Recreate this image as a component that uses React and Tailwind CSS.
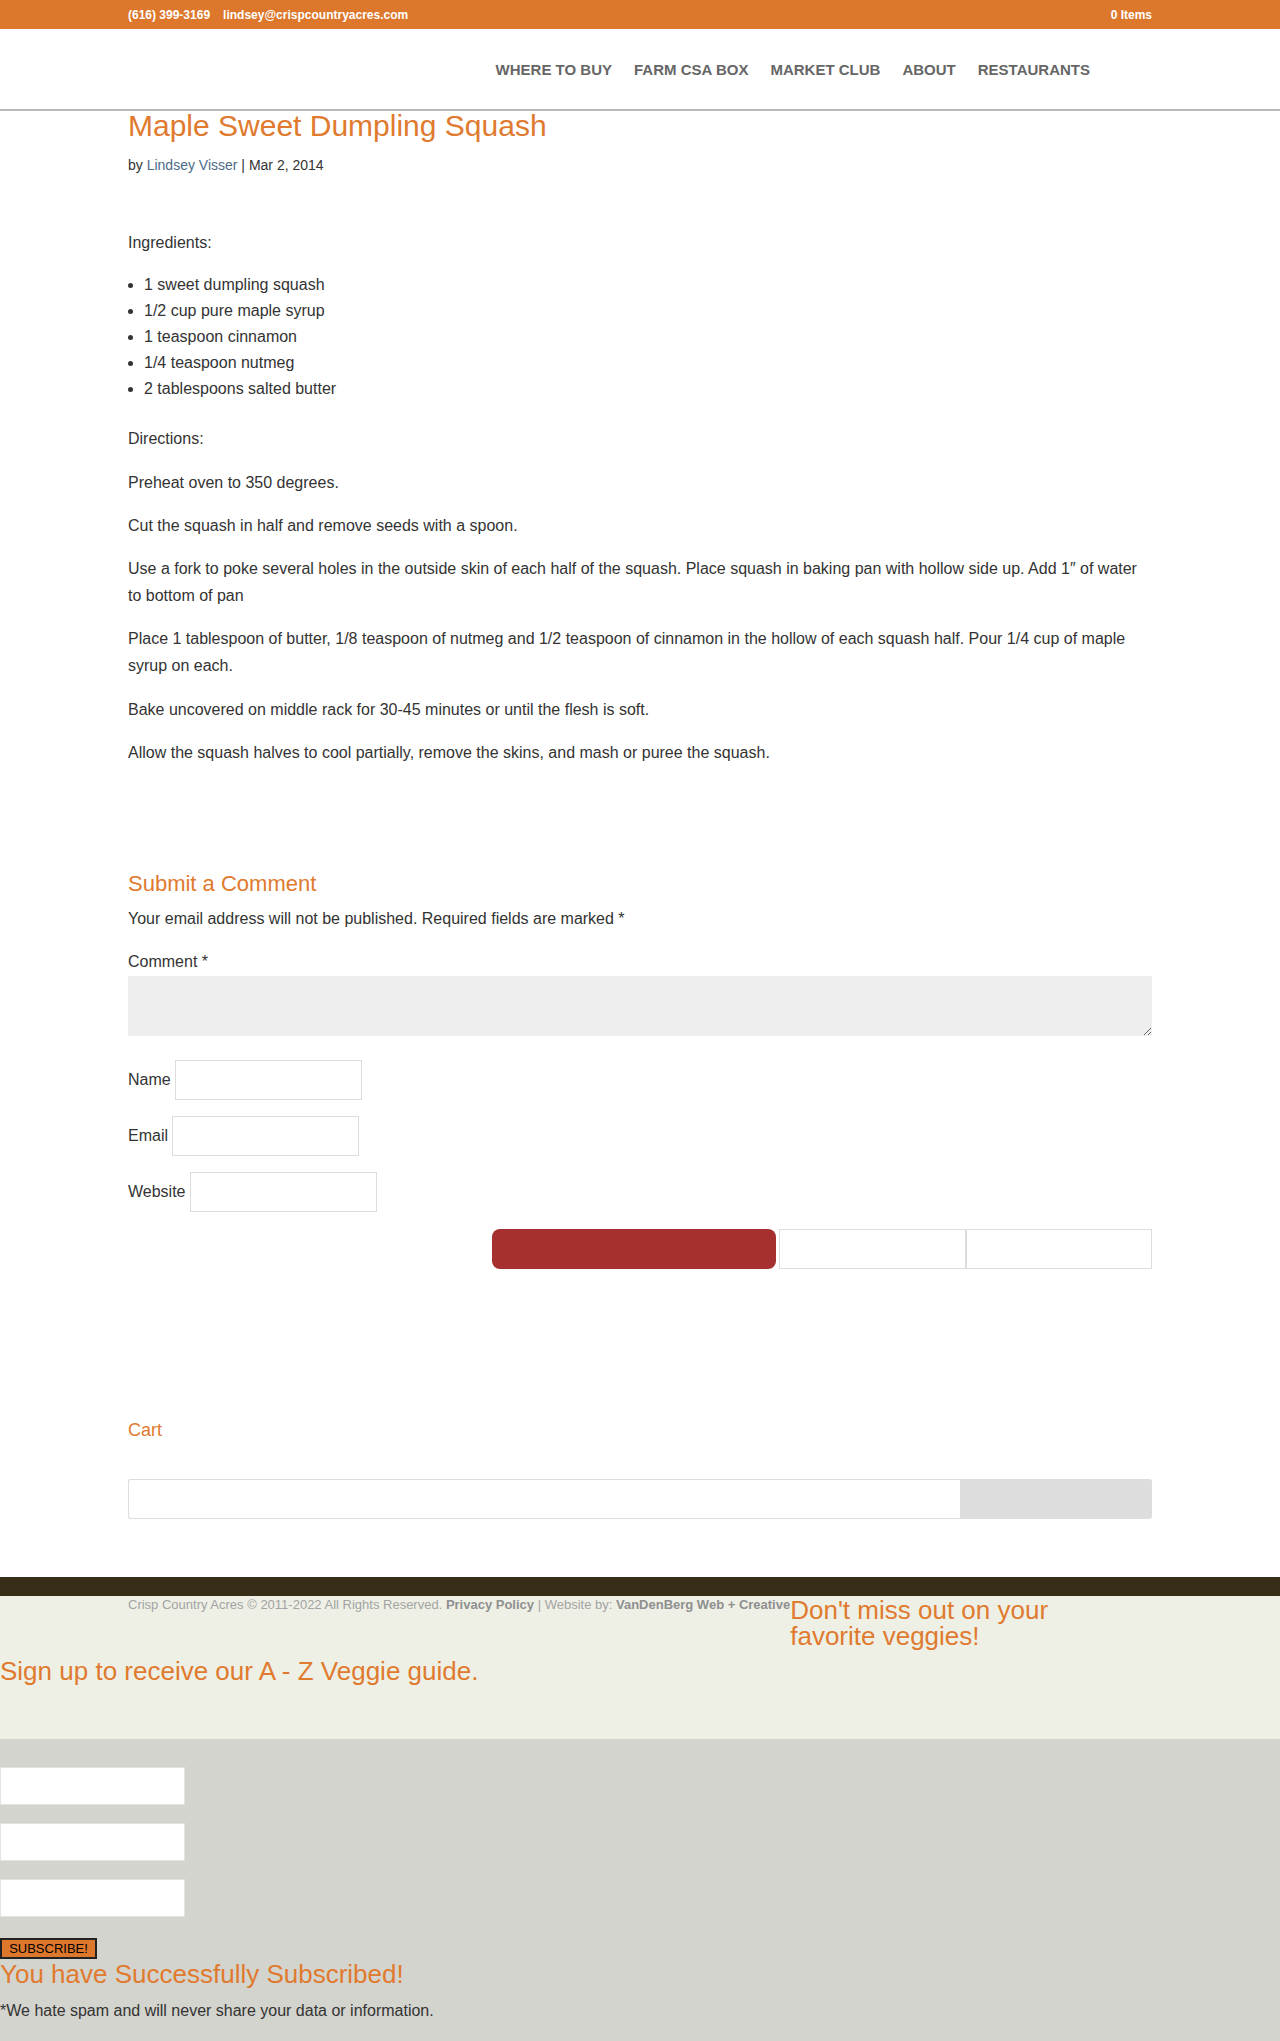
import React from "react";

const orange = "text-[#e07a2e]";

export default function App() {
  return (
    <div className="min-h-[2041px] bg-white font-['Liberation_Sans',Arial,sans-serif] text-[#333]">
      {/* top bar */}
      <div className="h-[29px] bg-[#dd772c]">
        <div className="mx-auto flex h-full w-[1024px] items-center justify-between text-[12px] font-bold text-white">
          <div className="flex gap-[13px]">
            <span>(616) 399-3169</span>
            <span>lindsey@crispcountryacres.com</span>
          </div>
          <span>0 Items</span>
        </div>
      </div>
      {/* nav */}
      <div className="h-[82px] border-b-2 border-[#b9b9b9]">
        <div className="mx-auto flex h-full w-[1024px] items-center justify-end gap-[22px] pr-[62px] pt-[2px] text-[15px] font-bold text-[#666]">
          <span>WHERE TO BUY</span>
          <span>FARM CSA BOX</span>
          <span>MARKET CLUB</span>
          <span>ABOUT</span>
          <span>RESTAURANTS</span>
        </div>
      </div>

      <div className="mx-auto w-[1024px]">
        <h1 className={`text-[30px] leading-[30px] ${orange}`}>Maple Sweet Dumpling Squash</h1>
        <p className="mt-[14px] text-[14px] leading-[20px]">
          by <span className="text-[#4b6a88]">Lindsey Visser</span> | Mar 2, 2014
        </p>

        <div className="mt-[54px] text-[16px] leading-[1.7]">
          <p className="pb-[16px]">Ingredients:</p>
          <ul className="list-disc pb-[23px] pl-[16px] leading-[26px]">
            <li>1 sweet dumpling squash</li>
            <li>1/2 cup pure maple syrup</li>
            <li>1 teaspoon cinnamon</li>
            <li>1/4 teaspoon nutmeg</li>
            <li>2 tablespoons salted butter</li>
          </ul>
          <p className="pb-[17px]">Directions:</p>
          <p className="pb-[15px]">Preheat oven to 350 degrees.</p>
          <p className="pb-[16px]">Cut the squash in half and remove seeds with a spoon.</p>
          <p className="pb-[16px]">
            Use a fork to poke several holes in the outside skin of each half of the squash. Place squash in baking pan with hollow side up. Add 1″ of water to bottom of pan
          </p>
          <p className="pb-[16px]">
            Place 1 tablespoon of butter, 1/8 teaspoon of nutmeg and 1/2 teaspoon of cinnamon in the hollow of each squash half. Pour 1/4 cup of maple syrup on each.
          </p>
          <p className="pb-[16px]">Bake uncovered on middle rack for 30-45 minutes or until the flesh is soft.</p>
          <p className="pb-[16px]">Allow the squash halves to cool partially, remove the skins, and mash or puree the squash.</p>
        </div>

        {/* comments */}
        <div className="mt-[89px]">
          <h3 className={`text-[22px] leading-[26px] ${orange}`}>Submit a Comment</h3>
          <p className="mt-[8px] text-[16px] leading-[1.7]">
            Your email address will not be published. Required fields are marked *
          </p>
          <p className="mt-[16px] text-[16px] leading-[1.7]">Comment *</p>
          <textarea className="mt-[1px] block h-[60px] w-full resize-y bg-[#eeeeee]" />
          <div className="mt-[24px] flex flex-col gap-[16px] text-[16px]">
            <div className="flex items-center gap-[4px]">
              <span>Name</span>
              <input className="h-[40px] w-[187px] border border-[#ddd] bg-white" />
            </div>
            <div className="flex items-center gap-[4px]">
              <span>Email</span>
              <input className="h-[40px] w-[187px] border border-[#ddd] bg-white" />
            </div>
            <div className="flex items-center gap-[4px]">
              <span>Website</span>
              <input className="h-[40px] w-[187px] border border-[#ddd] bg-white" />
            </div>
          </div>
          <div className="mt-[17px] flex justify-end">
            <div className="h-[40px] w-[284px] rounded-[8px] bg-[#a63030]" />
            <div className="ml-[3px] h-[40px] w-[187px] border border-[#ddd]" />
            <div className="h-[40px] w-[186px] border border-[#ddd]" />
          </div>
        </div>

        {/* cart */}
        <h4 className={`mt-[150px] text-[18px] leading-[22px] ${orange}`}>Cart</h4>
        <div className="mt-[38px] flex h-[40px]">
          <div className="flex-1 rounded-l-[3px] border border-r-0 border-[#ddd] bg-white" />
          <div className="w-[192px] rounded-r-[3px] bg-[#dddddd]" />
        </div>
      </div>

      {/* footer */}
      <div className="mt-[58px] h-[19px] bg-[#372c16]" />
      <div className="h-[143px] bg-[#eef0e6]">
        <div className="flex items-start">
          <p className="pl-[128px] text-[13px] leading-[18px] text-[#a3a3a3]">
            Crisp Country Acres © 2011-2022 All Rights Reserved. <span className="font-bold text-[#8f8f8f]">Privacy Policy</span> | Website by: <span className="font-bold text-[#8f8f8f]">VanDenBerg Web + Creative</span>
          </p>
          <p className={`mt-[1px] w-[300px] text-[26px] leading-[26px] ${orange}`}>Don't miss out on your favorite veggies!</p>
        </div>
        <p className={`mt-[9px] text-[26px] leading-[26px] ${orange}`}>Sign up to receive our A - Z Veggie guide.</p>
      </div>
      <div className="h-[302px] bg-[#d4d4ce] pt-[28px]">
        <div className="flex flex-col gap-[18px]">
          <input className="h-[38px] w-[185px] border border-[#e4e4e0] bg-white" />
          <input className="h-[38px] w-[185px] border border-[#e4e4e0] bg-white" />
          <input className="h-[38px] w-[185px] border border-[#e4e4e0] bg-white" />
        </div>
        <button className="mt-[21px] block h-[21px] w-[97px] border-2 border-[#222] bg-[#dd772c] text-[13px] leading-[17px] text-black">
          SUBSCRIBE!
        </button>
        <p className={`mt-[1px] text-[26px] leading-[28px] ${orange}`}>You have Successfully Subscribed!</p>
        <p className="mt-[13px] text-[16px] leading-[20px] text-[#333]">*We hate spam and will never share your data or information.</p>
      </div>
    </div>
  );
}
